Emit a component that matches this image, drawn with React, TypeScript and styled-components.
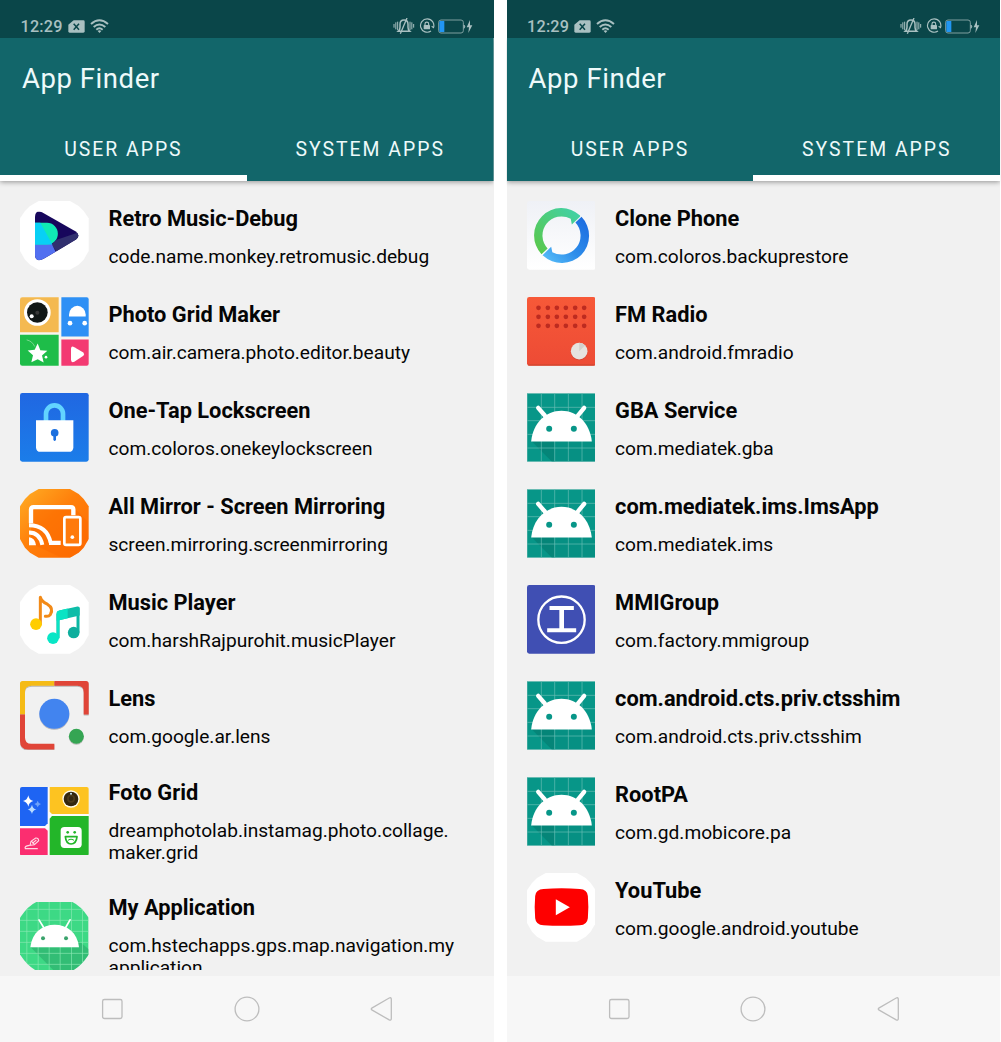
import React from "react";
import styled, { createGlobalStyle } from "styled-components";

const GlobalStyle = createGlobalStyle`
  * { box-sizing: border-box; }
  body { margin: 0; background: #fff; font-family: Roboto, "Liberation Sans", sans-serif; }
`;

const Screens = styled.main`
  display: flex;
  gap: 13px;
  width: 1001px;
  height: 1042px;
  overflow: hidden;
`;

const Phone = styled.section`
  display: flex;
  flex-direction: column;
  flex: none;
  width: 493.6px;
  height: 1042px;
  background: #f1f1f1;
`;

const StatusBar = styled.div`
  display: flex;
  justify-content: space-between;
  height: 38px;
  padding: 14px 20.2px 0 20.5px;
  background: #0a4649;
  color: #a9c0c1;
`;

const StatusGroup = styled.div<{ $gap: number }>`
  display: flex;
  align-items: center;
  gap: ${(p) => p.$gap}px;
  height: 24px;
`;

const Clock = styled.span`
  font-size: 16.2px;
  font-weight: 500;
  line-height: 24px;
  letter-spacing: 0.2px;
  padding-top: 2px;
`;

const Header = styled.header`
  position: relative;
  display: flex;
  flex-direction: column;
  height: 143px;
  background: #12666a;
  color: #eefafa;
  box-shadow: 0 1px 5px rgba(0, 0, 0, 0.4);
  clip-path: inset(0 0 -10px 0);
`;

const Title = styled.h1`
  margin: 0;
  padding: 23px 0 0 22px;
  height: 85px;
  font-size: 27.5px;
  line-height: 36px;
  font-weight: 400;
  letter-spacing: 0.55px;
`;

const Tabs = styled.nav`
  display: grid;
  grid-template-columns: 1fr 1fr;
  flex: 1;
`;

const Tab = styled.div<{ $active: boolean }>`
  display: flex;
  align-items: center;
  justify-content: center;
  font-size: 19.4px;
  letter-spacing: 2px;
  border-bottom: 6px solid ${(p) => (p.$active ? "#fff" : "transparent")};
`;

const List = styled.ul`
  flex: 1;
  min-height: 0;
  margin: 6.6px 0 6.5px;
  padding: 0;
  list-style: none;
  overflow: hidden;
`;

const Row = styled.li`
  display: flex;
  align-items: center;
  gap: 19.6px;
  padding: 13.65px 20.2px;
`;

const IconBox = styled.svg`
  flex: none;
  display: block;
  width: 68.7px;
  height: 68.7px;
`;

const AppText = styled.div`
  width: 352px;
  color: #050505;
`;

const AppName = styled.div`
  font-size: 21.8px;
  font-weight: 700;
  line-height: 32px;
  height: 42.9px;
  white-space: nowrap;
`;

const Package = styled.div`
  font-size: 19.15px;
  line-height: 22.4px;
  white-space: pre-line;
`;

const NavBar = styled.footer`
  display: flex;
  align-items: center;
  justify-content: space-between;
  height: 66px;
  padding: 0 99.4px;
  background: #f7f7f7;
`;

const Glyph = styled.svg`
  display: block;
  flex: none;
`;

const OCTAGON = "80,0 150,0 176,15 191,30 206,52 206,150 191,176 176,191 150,206 56,206 30,191 15,176 0,150 0,52 15,30 30,15 56,0";

function RetroIcon() {
  return (
    <IconBox viewBox="31 33.5 206 206">
      <defs>
        <clipPath id="retroPlay">
          <path d="M76 82Q76 60 97 67L197 124Q215 136 199 149L102 207Q79 219 76 197Z" />
        </clipPath>
      </defs>
      <polygon points={OCTAGON} transform="translate(31 33.5)" fill="#fff" />
      <g clipPath="url(#retroPlay)">
        <rect x="70" y="55" width="145" height="165" fill="#17075c" />
        <path d="M141 150L215 125V225H170L125 164Z" fill="#31306f" />
        <path d="M70 160H125L145 200L100 220H70Z" fill="#526ff0" />
        <path d="M70 99H112A32 32 0 0 1 112 164H70Z" fill="#10e9b5" />
        <path d="M70 99H92L128 164H70Z" fill="#08d0f5" />
      </g>
    </IconBox>
  );
}

function PhotoGridIcon() {
  return (
    <IconBox viewBox="31 321.5 206 206">
      <rect x="31" y="321.5" width="206" height="206" rx="7" fill="#f7f5ef" />
      <path d="M38 322H147V427H31V329Q31 322 38 322Z" fill="#f4b950" />
      <path d="M155 322H231Q237 322 237 329V440H155Z" fill="#2e90f5" />
      <path d="M31 435H147V528H38Q31 528 31 521Z" fill="#1ebd49" />
      <path d="M155 449H237V521Q237 528 231 528H155Z" fill="#f33a72" />
      <circle cx="83" cy="368" r="40" fill="#fff" />
      <circle cx="83" cy="368" r="31" fill="#111716" />
      <circle cx="83" cy="369" r="6" fill="#383838" />
      <circle cx="66" cy="379" r="6" fill="#fff" />
      <path d="M178 380V374A25 26 0 0 1 228 374V380Z" fill="#fff" />
      <circle cx="181" cy="400" r="7" fill="#fff" />
      <circle cx="225" cy="400" r="7" fill="#fff" />
      <path d="M84 461L92 481L113 483L97 497L102 518L84 508L65 517L70 496L54 482L75 480Z" fill="#fff" />
      <path d="M51 450Q68 454 75 470" fill="none" stroke="#8bdc9c" strokeWidth="2.5" />
      <circle cx="109" cy="502" r="4" fill="#fff" />
      <path d="M184 475Q185 467 194 472L221 488Q226 493 221 498L194 516Q184 520 184 510Z" fill="#fff" />
    </IconBox>
  );
}

function LockscreenIcon() {
  return (
    <IconBox viewBox="31 33.5 206 206">
      <defs>
        <linearGradient id="lockBg" x1="0" y1="0" x2="0" y2="1">
          <stop stopColor="#2067e2" />
          <stop offset="1" stopColor="#1b7de9" />
        </linearGradient>
      </defs>
      <rect x="31" y="33.5" width="206" height="206" rx="7" fill="url(#lockBg)" />
      <path d="M109 122V96A25.5 25.5 0 0 1 160 96V122" fill="none" stroke="#62d4ff" strokeWidth="14" />
      <path d="M79 115H191V196Q191 210 177 210H93Q79 210 79 196Z" fill="#fff" />
      <circle cx="135" cy="153" r="11.5" fill="#1c70df" />
      <path d="M131 154H139V174Q135 181 131 174Z" fill="#1c70df" />
    </IconBox>
  );
}

function MirrorIcon() {
  return (
    <IconBox viewBox="31 321.5 206 206">
      <defs>
        <linearGradient id="mirrorBg" x1="0" y1="0" x2="1" y2="1">
          <stop stopColor="#ffae25" />
          <stop offset=".45" stopColor="#ff800b" />
          <stop offset="1" stopColor="#ff6900" />
        </linearGradient>
      </defs>
      <polygon points={OCTAGON} transform="translate(31 321.5)" fill="url(#mirrorBg)" />
      <path d="M64 376H191L234 419V476L212 507L186 525H150L64 485Z" fill="#fb6900" opacity=".55" />
      <path d="M64 424V384Q64 376 72 376H184Q191 376 191 384V400M118 483H153" fill="none" stroke="#fff" strokeWidth="13" />
      <path d="M58 430Q112 430 123 483M58 452Q90 452 98 489" fill="none" stroke="#fff" strokeWidth="12" />
      <path d="M58 466Q76 468 79 490H58Z" fill="#fff" />
      <rect x="164" y="406" width="48" height="83" rx="5" fill="#ff7a0c" stroke="#fff" strokeWidth="8" />
      <circle cx="188" cy="466" r="5.5" fill="#fff" />
    </IconBox>
  );
}

function MusicIcon() {
  return (
    <IconBox viewBox="31 33.5 206 206">
      <polygon points={OCTAGON} transform="translate(31 33.5)" fill="#fff" />
      <path d="M92 151V70Q95 83 113 91Q133 103 122 122Q117 129 107 127" fill="none" stroke="#f28a18" strokeWidth="9" strokeLinecap="round" strokeLinejoin="round" />
      <circle cx="79" cy="151" r="17.5" fill="#ffcd00" />
      <path d="M145 193V123L205 107V176" fill="none" stroke="#0bb8a4" strokeWidth="9" />
      <path d="M141 117Q142 111 149 110L203 98Q210 97 210 104V125L141 141Z" fill="#0dbda8" />
      <path d="M141 117Q142 111 149 110L174 104V133L149 139V193H141Z" fill="#08e4c4" />
      <circle cx="130" cy="193" r="17.5" fill="#08e6c6" />
      <circle cx="192" cy="176" r="17.5" fill="#0eae9d" />
    </IconBox>
  );
}

function LensIcon() {
  return (
    <IconBox viewBox="31 321.5 206 206">
      <defs>
        <filter id="lensShade" x="-20%" y="-20%" width="140%" height="150%">
          <feDropShadow dx="0" dy="3" stdDeviation="2" floodColor="#444" floodOpacity=".35" />
        </filter>
      </defs>
      <g filter="url(#lensShade)">
        <path d="M39 321.5H134V336H66Q46 336 46 354V422H31V330Q31 321.5 39 321.5Z" fill="#f5bb16" />
        <path d="M134 321.5H229Q237 321.5 237 330V422H222V355Q222 336 203 336H134Z" fill="#e04437" />
        <path d="M31 422H46V491Q46 510 65 510H134V527H55Q31 527 31 501Z" fill="#e04437" />
        <circle cx="134" cy="420" r="45" fill="#4384ef" />
        <circle cx="200" cy="487" r="22.5" fill="#35a552" />
      </g>
    </IconBox>
  );
}

function FotoGridIcon() {
  return (
    <IconBox viewBox="31 51 206 206">
      <rect x="31" y="51" width="206" height="206" rx="6" fill="#fafafa" />
      <path d="M37 51H114V160L106 168H31V57Q31 51 37 51Z" fill="#1e64f3" />
      <path d="M120 51H231Q237 51 237 57V132H127L120 125Z" fill="#fdc321" />
      <path d="M31 175H106L114 182V257H37Q31 257 31 251Z" fill="#fb2e70" />
      <path d="M127 138H237V251Q237 257 231 257H120V146Z" fill="#23b629" />
      <path d="M56 76Q58 91 71 93Q58 96 56 110Q53 96 40 93Q53 91 56 76Z" fill="#fff" />
      <path d="M67 104Q69 116 80 118Q69 121 67 132Q64 121 54 118Q64 116 67 104Z" fill="#b9dcff" />
      <path d="M84 92Q86 101 94 102Q86 104 84 112Q82 104 74 102Q82 101 84 92Z" fill="#6fa3f8" />
      <circle cx="184" cy="87" r="26" fill="#fffbea" />
      <circle cx="184" cy="87" r="22" fill="#33260f" />
      <circle cx="184" cy="86" r="12" fill="#4c3b1c" />
      <circle cx="184" cy="86" r="7" fill="#342812" />
      <circle cx="184" cy="71" r="3" fill="#ccefff" />
      <rect x="153" y="171" width="63" height="63" rx="11" fill="#fff" />
      <circle cx="174" cy="187" r="4" fill="#23b629" />
      <circle cx="195" cy="187" r="4" fill="#23b629" />
      <path d="M167 200H202Q200 222 184 222Q169 222 167 200Z" fill="#fff" stroke="#23b629" strokeWidth="5" strokeLinejoin="round" />
      <path d="M175 211Q184 205 193 211" fill="none" stroke="#23b629" strokeWidth="3" />
      <path d="M61 226L64 214L78 204Q86 203 87 212L74 224Z M66 214L74 223M80 210L68 220" fill="none" stroke="#ffd8e4" strokeWidth="3.2" />
      <path d="M59 226Q43 228 47 236H83" fill="none" stroke="#ffd8e4" strokeWidth="3.5" strokeLinecap="round" />
    </IconBox>
  );
}

function MyAppIcon() {
  return (
    <IconBox viewBox="31 395.5 206 206">
      <defs>
        <clipPath id="myAppShape">
          <path d="M80 395.5H188Q214 407 237 443V553Q214 588 188 601.5H80Q54 588 31 553V443Q54 407 80 395.5Z" />
        </clipPath>
      </defs>
      <g clipPath="url(#myAppShape)">
        <rect x="31" y="395" width="206" height="207" fill="#3dd985" />
        <path d="M63 531L133 602H237V537L205 510L208 531Z" fill="#2fb571" opacity=".8" />
        <path d="M51.5 395V602M85.5 395V602M118.5 395V602M151.5 395V602M185.5 395V602M218.5 395V602M31 417.5H237M31 450.5H237M31 483.5H237M31 516.5H237M31 549.5H237M31 582.5H237" stroke="#89e8b4" strokeWidth="2" />
      </g>
      <path d="M62 531C67 487 98 464 135 464S203 487 208 531Z" fill="#fff" />
      <path d="M88 449L102 472M181 449L168 472" stroke="#fff" strokeWidth="5" strokeLinecap="round" />
      <circle cx="100" cy="504" r="6" fill="#3aa36c" />
      <circle cx="169" cy="504" r="6" fill="#3aa36c" />
    </IconBox>
  );
}

function ClonePhoneIcon() {
  return (
    <IconBox viewBox="30.5 33.5 206 206">
      <defs>
        <linearGradient id="cloneBg" x1="0" y1="0" x2="0" y2="1">
          <stop stopColor="#eff1f6" />
          <stop offset="1" stopColor="#fff" />
        </linearGradient>
        <linearGradient id="cloneGreen" x1="1" y1="0" x2="0" y2="1">
          <stop stopColor="#40d2ad" />
          <stop offset="1" stopColor="#5bc744" />
        </linearGradient>
        <linearGradient id="cloneBlue" x1="1" y1="0" x2="0" y2="1">
          <stop stopColor="#1a68df" />
          <stop offset=".55" stopColor="#2d8dea" />
          <stop offset="1" stopColor="#5cc3fa" />
        </linearGradient>
      </defs>
      <rect x="30.5" y="33.5" width="206" height="206" rx="7" fill="url(#cloneBg)" />
      <path d="M74 192.9A82 82 0 0 1 189.6 76.7L190 80L165 104L161.6 87.1A57 57 0 0 0 92.3 175.9Z" fill="url(#cloneGreen)" />
      <path d="M194 81.1A82 82 0 0 1 79.1 198L77 196L103 171L106.4 186.9A57 57 0 0 0 175.7 98.1Z" fill="url(#cloneBlue)" />
    </IconBox>
  );
}

function RadioIcon() {
  const columns = [65, 93, 120, 147, 175, 202];
  const rows = [354, 381, 408];
  return (
    <IconBox viewBox="30.5 321.5 206 206">
      <defs>
        <linearGradient id="radioBg" x1="0" y1="0" x2="0" y2="1">
          <stop stopColor="#f75938" />
          <stop offset="1" stopColor="#ed4b35" />
        </linearGradient>
      </defs>
      <rect x="30.5" y="321.5" width="206" height="206" rx="7" fill="url(#radioBg)" />
      <rect x="33" y="524" width="201" height="3" rx="2" fill="#c7452f" />
      {rows.map((y) => columns.map((x) => <circle key={`${x}-${y}`} cx={x} cy={y} r="7" fill="#bd2b20" />))}
      <circle cx="187" cy="486" r="25.5" fill="#b93a2a" opacity=".5" />
      <circle cx="187" cy="484" r="25" fill="#e6e3df" />
      <path d="M187 484V459A25 25 0 0 1 205 467Z" fill="#d3d1cd" />
    </IconBox>
  );
}

function AndroidIcon() {
  return (
    <IconBox viewBox="30.5 33.5 206 206">
      <rect x="31" y="35" width="205" height="204" fill="#079688" />
      <path d="M45 178L105 239H236V188L223 175Z" fill="#07887a" opacity=".35" />
      <path d="M45 178H113V239H105Z" fill="#067c70" opacity=".55" />
      <path d="M73.5 35V239M113.5 35V239M154.5 35V239M195.5 35V239M31 76.5H236M31 116.5H236M31 157.5H236M31 198.5H236" stroke="#69beb5" strokeWidth="2" />
      <rect x="31.5" y="35.5" width="204" height="203" fill="none" stroke="#4dada2" strokeWidth="1" />
      <path d="M43 179C48 125 86 87 134 87S219 125 225 179Z" fill="#fff" />
      <path d="M64 78L84 101M202 78L183 101" stroke="#fff" strokeWidth="13" strokeLinecap="round" />
      <circle cx="97" cy="140.5" r="9" fill="#079688" />
      <circle cx="171" cy="140.5" r="9" fill="#079688" />
    </IconBox>
  );
}

function MmiIcon() {
  return (
    <IconBox viewBox="30.5 33.5 206 206">
      <rect x="30.5" y="33.5" width="206" height="206" rx="7" fill="#404fb3" />
      <circle cx="134" cy="137.5" r="69.5" fill="none" stroke="#fff" strokeWidth="7" />
      <path d="M98 102.5H171M91 169.5H178" stroke="#fff" strokeWidth="12" />
      <path d="M134.5 102V170" stroke="#fff" strokeWidth="14" />
    </IconBox>
  );
}

function YouTubeIcon() {
  return (
    <IconBox viewBox="30.5 310 206 206">
      <polygon points={OCTAGON} transform="translate(30.5 310)" fill="#fff" />
      <path d="M80 358Q134 354 189 358Q211 359 213 379Q216 412 213 446Q211 466 189 467Q134 470 80 467Q57 466 55 446Q52 412 55 379Q57 359 80 358Z" fill="#fe0000" />
      <path d="M117 389V437L159 413Z" fill="#fff" />
    </IconBox>
  );
}

function SimIcon() {
  return (
    <Glyph viewBox="205 61 51 39" width="17" height="13">
      <path d="M222 62H251Q255 62 255 66V95Q255 99 251 99H210Q206 99 206 95V75Z" fill="#a9c0c1" />
      <path d="M222 72L238 90M238 72L222 90" stroke="#0a4649" strokeWidth="4.5" />
    </Glyph>
  );
}

function WifiIcon() {
  return (
    <Glyph viewBox="269 55 57 42" width="19" height="14">
      <path d="M272 70Q297 48 323 70M280 79Q297 64 315 79M288 87Q297 79 307 87" fill="none" stroke="#a9c0c1" strokeWidth="6" />
      <path d="M292 91Q297 87 303 91L297.5 97Z" fill="#a9c0c1" />
    </Glyph>
  );
}

function MutedIcon() {
  return (
    <Glyph viewBox="446 54 66 48" width="22" height="16">
      <g fill="none" stroke="#a9c0c1" strokeWidth="3">
        <path d="M449 72V83M454.5 67V88M460 65V91M497 65V91M502.5 67V88M508 72V83" />
        <path d="M462 94Q467 90 467 82V73Q467 60 479 60Q491 60 491 73V82Q491 90 496 94Z" strokeWidth="4.5" />
        <path d="M488 54L468 101" strokeWidth="4" />
      </g>
    </Glyph>
  );
}

function RotationLockIcon() {
  return (
    <Glyph viewBox="521 54 48 48" width="16" height="16">
      <path d="M557 93A20 20 0 1 1 564.5 83L559 79" fill="none" stroke="#a9c0c1" strokeWidth="3.5" />
      <rect x="535" y="75" width="19" height="13" rx="2" fill="#a9c0c1" />
      <path d="M539 76V72A5.5 5.5 0 0 1 550 72V76" fill="none" stroke="#a9c0c1" strokeWidth="3.5" />
    </Glyph>
  );
}

function BatteryIcon() {
  return (
    <Glyph viewBox="584 55 105 45" width="35" height="15">
      <rect x="586" y="58" width="74" height="39" rx="7" fill="none" stroke="#7f9fa0" strokeWidth="3" />
      <path d="M591 61H603V94H591Q588 94 588 90V65Q588 61 591 61Z" fill="#2196f3" />
      <path d="M662 73Q667 77.5 662 83Z" fill="#a9c0c1" stroke="#a9c0c1" strokeWidth="2" />
      <path d="M680 58L670 80H677L675 97L687 74H680Z" fill="#a9c0c1" />
    </Glyph>
  );
}

type Entry = { name: string; pkg: string; Icon: () => React.ReactElement };

const userApps: Entry[] = [
  { name: "Retro Music-Debug", pkg: "code.name.monkey.retromusic.debug", Icon: RetroIcon },
  { name: "Photo Grid Maker", pkg: "com.air.camera.photo.editor.beauty", Icon: PhotoGridIcon },
  { name: "One-Tap Lockscreen", pkg: "com.coloros.onekeylockscreen", Icon: LockscreenIcon },
  { name: "All Mirror - Screen Mirroring", pkg: "screen.mirroring.screenmirroring", Icon: MirrorIcon },
  { name: "Music Player", pkg: "com.harshRajpurohit.musicPlayer", Icon: MusicIcon },
  { name: "Lens", pkg: "com.google.ar.lens", Icon: LensIcon },
  { name: "Foto Grid", pkg: "dreamphotolab.instamag.photo.collage.\nmaker.grid", Icon: FotoGridIcon },
  { name: "My Application", pkg: "com.hstechapps.gps.map.navigation.my\napplication", Icon: MyAppIcon },
];

const systemApps: Entry[] = [
  { name: "Clone Phone", pkg: "com.coloros.backuprestore", Icon: ClonePhoneIcon },
  { name: "FM Radio", pkg: "com.android.fmradio", Icon: RadioIcon },
  { name: "GBA Service", pkg: "com.mediatek.gba", Icon: AndroidIcon },
  { name: "com.mediatek.ims.ImsApp", pkg: "com.mediatek.ims", Icon: AndroidIcon },
  { name: "MMIGroup", pkg: "com.factory.mmigroup", Icon: MmiIcon },
  { name: "com.android.cts.priv.ctsshim", pkg: "com.android.cts.priv.ctsshim", Icon: AndroidIcon },
  { name: "RootPA", pkg: "com.gd.mobicore.pa", Icon: AndroidIcon },
  { name: "YouTube", pkg: "com.google.android.youtube", Icon: YouTubeIcon },
];

function PhoneScreen({ apps, activeTab }: { apps: Entry[]; activeTab: number }) {
  return (
    <Phone>
      <StatusBar>
        <StatusGroup $gap={5}>
          <Clock>12:29</Clock>
          <SimIcon />
          <WifiIcon />
        </StatusGroup>
        <StatusGroup $gap={3.5}>
          <MutedIcon />
          <RotationLockIcon />
          <BatteryIcon />
        </StatusGroup>
      </StatusBar>
      <Header>
        <Title>App Finder</Title>
        <Tabs>
          {["USER APPS", "SYSTEM APPS"].map((label, index) => (
            <Tab key={label} $active={index === activeTab}>{label}</Tab>
          ))}
        </Tabs>
      </Header>
      <List>
        {apps.map(({ name, pkg, Icon }) => (
          <Row key={name}>
            <Icon />
            <AppText>
              <AppName>{name}</AppName>
              <Package>{pkg}</Package>
            </AppText>
          </Row>
        ))}
      </List>
      <NavBar>
        <Glyph viewBox="0 0 26 26" width="26" height="26">
          <rect x="3.6" y="3.5" width="19.4" height="19" rx="1.8" fill="none" stroke="#bdbdbd" strokeWidth="1.3" />
        </Glyph>
        <Glyph viewBox="0 0 26 26" width="26" height="26">
          <circle cx="13" cy="13" r="11.9" fill="none" stroke="#bdbdbd" strokeWidth="1.3" />
        </Glyph>
        <Glyph viewBox="0 0 26 26" width="26" height="26">
          <path d="M4.2 11.9L21.2 2Q23.3 1.2 23.3 3.2V22.6Q23.3 24.8 21.2 23.9L4.2 14.1Q2.3 13 4.2 11.9Z" fill="none" stroke="#bdbdbd" strokeWidth="1.3" />
        </Glyph>
      </NavBar>
    </Phone>
  );
}

export default function App() {
  return (
    <>
      <GlobalStyle />
      <Screens>
        <PhoneScreen apps={userApps} activeTab={0} />
        <PhoneScreen apps={systemApps} activeTab={1} />
      </Screens>
    </>
  );
}
